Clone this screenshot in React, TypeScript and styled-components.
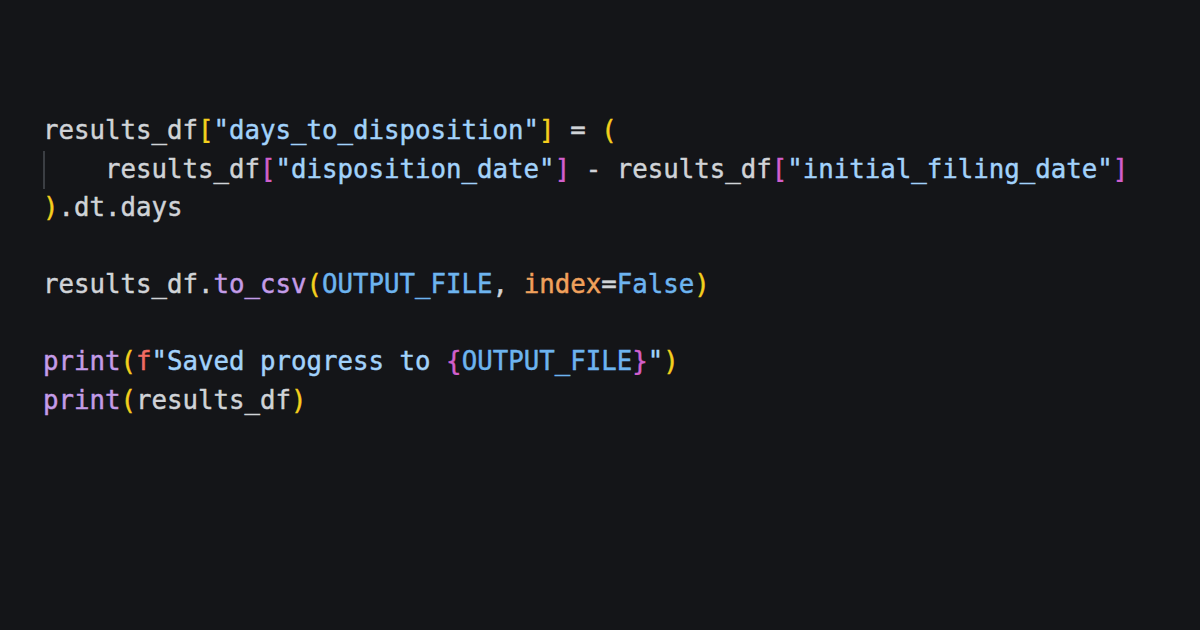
import React from "react";
import styled, { createGlobalStyle } from "styled-components";

const Global = createGlobalStyle`
  html, body { margin: 0; padding: 0; background: #141518; }
  #root { width: 1200px; height: 630px; }
`;

const Page = styled.div`
  width: 1200px;
  height: 630px;
  box-sizing: border-box;
  background: #141518;
  padding: 111px 0 0 43px;
  overflow: hidden;
`;

const Code = styled.div`
  font-family: "DejaVu Sans Mono", "Liberation Mono", monospace;
  font-size: 25.75px;
  line-height: 38.5px;
  color: #d0d3d7;
  -webkit-text-stroke: 0.45px currentColor;
  white-space: pre;
  display: flex;
  flex-direction: column;
`;

const Line = styled.div<{ $guide?: boolean }>`
  height: 38.5px;
  position: relative;
  ${(p) =>
    p.$guide
      ? `&::before { content: ""; position: absolute; left: 0; top: 1px; bottom: -1px; width: 2px; background: #3b3e43; }`
      : ""}
`;

type Kind = "str" | "y" | "m" | "fn" | "const" | "param" | "fpre";

const colors: Record<Kind, string> = {
  str: "#a2d2fb",
  y: "#f5cf1d",
  m: "#d25fcc",
  fn: "#c49ce8",
  const: "#6db4ef",
  param: "#f0a15c",
  fpre: "#f06b62",
};

const Tok = styled.span<{ $k: Kind }>`
  color: ${(p) => colors[p.$k]};
`;

export default function App() {
  return (
    <>
      <Global />
      <Page>
        <Code>
          <Line>
            results_df<Tok $k="y">[</Tok>
            <Tok $k="str">"days_to_disposition"</Tok>
            <Tok $k="y">]</Tok> = <Tok $k="y">(</Tok>
          </Line>
          <Line $guide>
            {"    "}results_df<Tok $k="m">[</Tok>
            <Tok $k="str">"disposition_date"</Tok>
            <Tok $k="m">]</Tok> - results_df<Tok $k="m">[</Tok>
            <Tok $k="str">"initial_filing_date"</Tok>
            <Tok $k="m">]</Tok>
          </Line>
          <Line>
            <Tok $k="y">)</Tok>.dt.days
          </Line>
          <Line />
          <Line>
            results_df.<Tok $k="fn">to_csv</Tok>
            <Tok $k="y">(</Tok>
            <Tok $k="const">OUTPUT_FILE</Tok>, <Tok $k="param">index</Tok>=
            <Tok $k="const">False</Tok>
            <Tok $k="y">)</Tok>
          </Line>
          <Line />
          <Line>
            <Tok $k="fn">print</Tok>
            <Tok $k="y">(</Tok>
            <Tok $k="fpre">f</Tok>
            <Tok $k="str">"Saved progress to </Tok>
            <Tok $k="m">{"{"}</Tok>
            <Tok $k="const">OUTPUT_FILE</Tok>
            <Tok $k="m">{"}"}</Tok>
            <Tok $k="str">"</Tok>
            <Tok $k="y">)</Tok>
          </Line>
          <Line>
            <Tok $k="fn">print</Tok>
            <Tok $k="y">(</Tok>results_df<Tok $k="y">)</Tok>
          </Line>
        </Code>
      </Page>
    </>
  );
}
